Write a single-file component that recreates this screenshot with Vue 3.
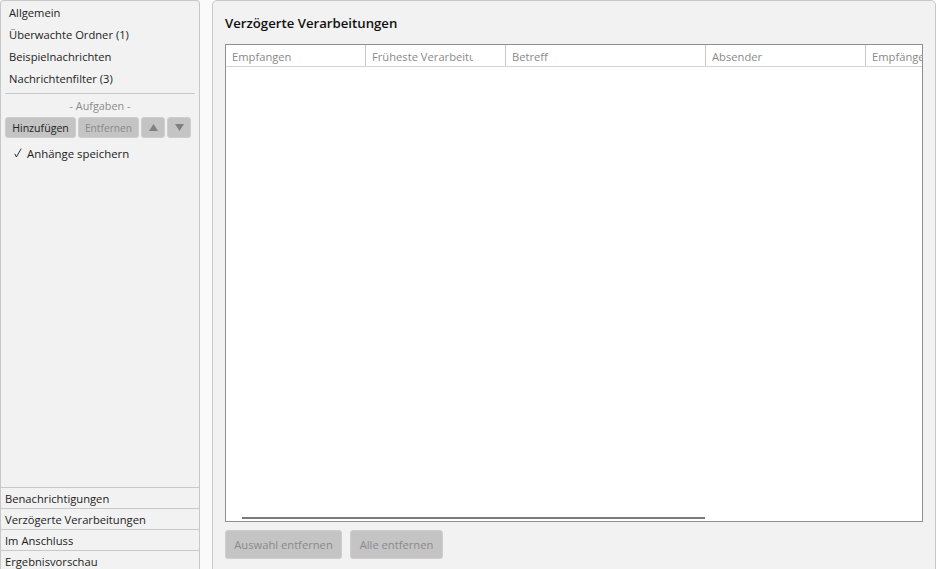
<script setup>
const navItems = ['Allgemein', 'Überwachte Ordner (1)', 'Beispielnachrichten', 'Nachrichtenfilter (3)']
const sections = ['Benachrichtigungen', 'Verzögerte Verarbeitungen', 'Im Anschluss', 'Ergebnisvorschau']
const columns = [
  { label: 'Empfangen', width: 140 },
  { label: 'Früheste Verarbeitung', width: 140 },
  { label: 'Betreff', width: 200 },
  { label: 'Absender', width: 160 },
  { label: 'Empfänger', width: 160 },
]
</script>

<template>
  <div class="app">
    <aside class="sidebar">
      <div class="top">
        <div v-for="item in navItems" :key="item" class="nav-item">{{ item }}</div>
        <hr />
        <div class="tasks-title">- Aufgaben -</div>
        <div class="task-buttons">
          <button class="btn active add">Hinzufügen</button>
          <button class="btn remove">Entfernen</button>
          <button class="btn arrow"><svg width="9" height="7" viewBox="0 0 9 7"><path d="M4.5 0 9 7H0z" /></svg></button>
          <button class="btn arrow"><svg width="9" height="7" viewBox="0 0 9 7"><path d="M0 0h9L4.5 7z" /></svg></button>
        </div>
        <div class="task">
          <svg class="check" width="8" height="10" viewBox="0 0 8 10"><path d="M.8 5.8 2.4 9 7.2.6" /></svg>
          Anhänge speichern
        </div>
      </div>
      <div v-for="section in sections" :key="section" class="section">{{ section }}</div>
    </aside>

    <main class="panel">
      <h1>Verzögerte Verarbeitungen</h1>
      <div class="table">
        <div class="thead">
          <div v-for="col in columns" :key="col.label" class="th" :style="{ width: col.width + 'px' }">
            <span>{{ col.label }}</span>
          </div>
        </div>
        <div class="tbody">
          <div class="scrollbar"></div>
        </div>
      </div>
      <div class="actions">
        <button class="btn big first">Auswahl entfernen</button>
        <button class="btn big second">Alle entfernen</button>
      </div>
    </main>
  </div>
</template>

<style>
body { background: #fafafa; }
</style>

<style scoped>
.app {
  display: flex;
  gap: 12px;
  width: 936px;
  height: 569px;
  overflow: hidden;
  font-family: 'Open Sans', 'Noto Sans', sans-serif;
  font-size: 11.2px;
  color: #222;
}

.sidebar {
  display: flex;
  flex-direction: column;
  box-sizing: border-box;
  flex: 0 0 200px;
  height: 571px;
  background: #f2f2f2;
  border: 1px solid #c8c8c8;
  border-bottom: none;
  border-radius: 4px 4px 0 0;
}
.top { flex: 1; padding-top: 1px; }
.nav-item { height: 22px; line-height: 22px; padding-left: 8px; white-space: nowrap; }
hr { border: none; border-top: 1px solid #c8c8c8; margin: 3px 4px 0; }
.tasks-title { height: 23px; line-height: 23px; text-align: center; color: #8a8a8a; font-size: 10.8px; }

.task-buttons { display: flex; gap: 2px; padding-left: 4px; }
.btn {
  box-sizing: border-box;
  border: 1px solid #cecece;
  border-radius: 3px;
  background: #c4c4c4;
  color: #8a8a8a;
  font: inherit;
  padding: 0;
  height: 21px;
  display: flex;
  align-items: center;
  justify-content: center;
}
.btn.active { color: #222; }
.add { width: 71px; font-size: 10.6px; }
.remove { width: 61px; font-size: 10.2px; }
.arrow { width: 24px; }
.arrow svg { fill: #808080; }

.task { display: flex; align-items: center; height: 20px; margin-top: 5px; padding-left: 13px; font-size: 11.4px; white-space: nowrap; }
.check { margin-right: 5px; fill: none; stroke: #333; stroke-width: 1; }

.section { height: 21px; line-height: 21px; padding-left: 4px; border-top: 1px solid #c8c8c8; box-sizing: border-box; white-space: nowrap; }

.panel {
  flex: 1;
  display: flex;
  flex-direction: column;
  box-sizing: border-box;
  height: 575px;
  padding: 13px 12px 0 12px;
  background: #f2f2f2;
  border: 1px solid #c8c8c8;
  border-radius: 5px 5px 0 0;
}
h1 { margin: 0 0 12px; height: 18px; line-height: 18px; font-size: 13.2px; font-weight: 600; color: #111; }

.table {
  box-sizing: border-box;
  width: 698px;
  height: 478px;
  display: flex;
  flex-direction: column;
  background: #fff;
  border: 1px solid #8f8f8f;
  overflow: hidden;
}
.thead { display: flex; box-sizing: border-box; flex: 0 0 22px; border-bottom: 1px solid #d4d4d4; }
.th {
  flex: none;
  box-sizing: border-box;
  height: 21px;
  padding: 0 32px 0 6px;
  line-height: 24px;
  color: #8a8a8a;
  border-right: 1px solid #c8c8c8;
  overflow: hidden;
  white-space: nowrap;
}
.th span { display: block; overflow: hidden; }
.th:last-child { border-right: none; }
.tbody { flex: 1; display: flex; align-items: flex-end; padding: 0 0 2px 16px; }
.scrollbar { width: 463px; height: 2px; background: #7a7a7a; }

.actions { display: flex; gap: 8px; margin-top: 8px; }
.big { height: 29px; font-size: 11.2px; }
.first { width: 117px; }
.second { width: 93px; }
</style>
